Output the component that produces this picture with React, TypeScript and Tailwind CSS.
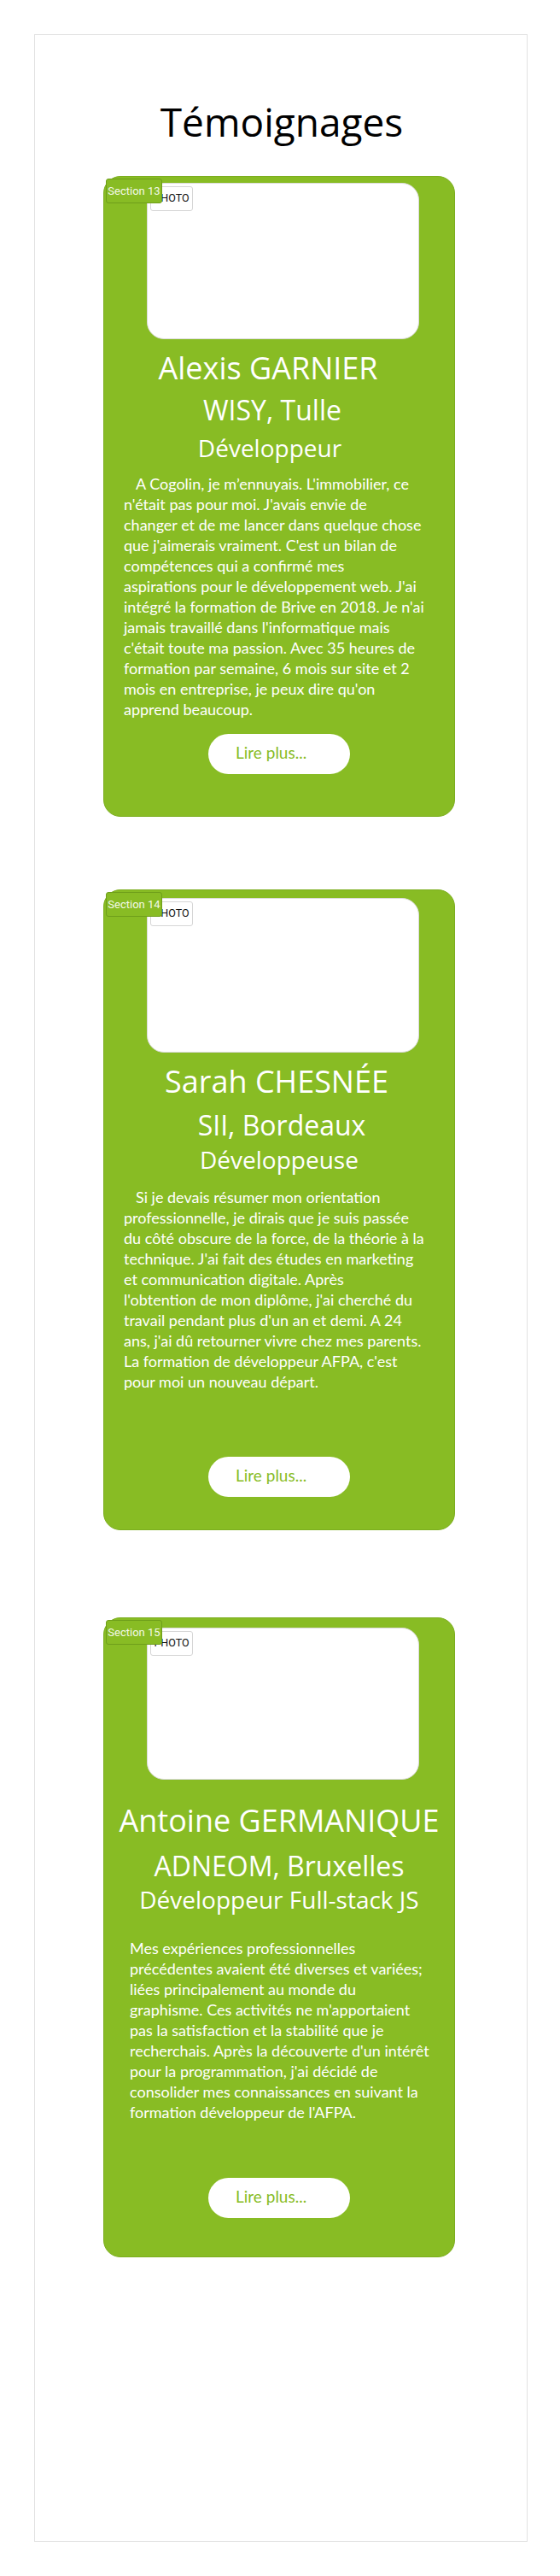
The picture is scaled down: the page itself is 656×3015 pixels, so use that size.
import React from "react";

type Card = {
  section: string;
  h: string;
  photoMt: string;
  photoH: string;
  lines: { text: string; cls: string }[];
  body: string[];
  bodyCls: string;
  btnMt: string;
};

const cards: Card[] = [
  {
    section: "Section 13",
    h: "h-[750px]",
    photoMt: "mt-[7px]",
    photoH: "h-[183px]",
    lines: [
      { text: "Alexis GARNIER", cls: "mt-[12px] text-[36px] leading-[44px] pr-[26px]" },
      { text: "WISY, Tulle", cls: "mt-[7px] text-[32px] leading-[40px] pr-[16px]" },
      { text: "Développeur", cls: "mt-[6px] text-[28px] leading-[36px] pr-[22px]" },
    ],
    body: [
      "A Cogolin, je m’ennuyais. L'immobilier, ce",
      "n'était pas pour moi. J'avais envie de",
      "changer et de me lancer dans quelque chose",
      "que j'aimerais vraiment. C'est un bilan de",
      "compétences qui a confirmé mes",
      "aspirations pour le développement web. J'ai",
      "intégré la formation de Brive en 2018. Je n'ai",
      "jamais travaillé dans l'informatique mais",
      "c'était toute ma passion. Avec 35 heures de",
      "formation par semaine, 6 mois sur site et 2",
      "mois en entreprise, je peux dire qu'on",
      "apprend beaucoup.",
    ],
    bodyCls: "mt-[12px] pl-[23px] indent-[14px]",
    btnMt: "mt-[17px]",
  },
  {
    section: "Section 14",
    h: "h-[750px]",
    photoMt: "mt-[9px]",
    photoH: "h-[181px]",
    lines: [
      { text: "Sarah CHESNÉE", cls: "mt-[12px] text-[36px] leading-[44px] pr-[6px]" },
      { text: "SII, Bordeaux", cls: "mt-[9px] text-[32px] leading-[40px] pl-[6px]" },
      { text: "Développeuse", cls: "mt-[2px] text-[28px] leading-[36px]" },
    ],
    body: [
      "Si je devais résumer mon orientation",
      "professionnelle, je dirais que je suis passée",
      "du côté obscure de la force, de la théorie à la",
      "technique. J'ai fait des études en marketing",
      "et communication digitale. Après",
      "l'obtention de mon diplôme, j'ai cherché du",
      "travail pendant plus d'un an et demi. A 24",
      "ans, j'ai dû retourner vivre chez mes parents.",
      "La formation de développeur AFPA, c'est",
      "pour moi un nouveau départ.",
    ],
    bodyCls: "mt-[14px] pl-[23px] indent-[14px]",
    btnMt: "mt-[76px]",
  },
  {
    section: "Section 15",
    h: "h-[749px]",
    photoMt: "mt-[11px]",
    photoH: "h-[178px]",
    lines: [
      { text: "Antoine GERMANIQUE", cls: "mt-[26px] text-[36px] leading-[44px]" },
      { text: "ADNEOM, Bruxelles", cls: "mt-[11px] text-[32px] leading-[40px]" },
      { text: "Développeur Full-stack JS", cls: "mt-[1px] text-[28px] leading-[36px]" },
    ],
    body: [
      "Mes expériences professionnelles",
      "précédentes avaient été diverses et variées;",
      "liées principalement au monde du",
      "graphisme. Ces activités ne m'apportaient",
      "pas la satisfaction et la stabilité que je",
      "recherchais. Après la découverte d'un intérêt",
      "pour la programmation, j'ai décidé de",
      "consolider mes connaissances en suivant la",
      "formation développeur de l'AFPA.",
    ],
    bodyCls: "mt-[27px] pl-[30px]",
    btnMt: "mt-[65px]",
  },
];

function TestimonialCard({ c, mt }: { c: Card; mt: string }) {
  return (
    <div
      className={`relative ${mt} ${c.h} w-[412px] ml-[80px] flex flex-col rounded-[20px] border border-[#7cae1f] bg-[#88bc24] text-white`}
    >
      <div
        className={`relative ${c.photoMt} ml-[50px] ${c.photoH} w-[319px] shrink-0 rounded-[20px] border border-[#dcdcdc] bg-white`}
      >
        <div className="absolute left-[3px] top-[3px] flex h-[29px] w-[50px] items-center justify-center rounded-[3px] border border-[#d6d6d6] bg-white font-[family-name:Roboto,'Liberation_Sans',sans-serif] text-[12.5px] font-normal text-[#111]">
          PHOTO
        </div>
      </div>
      <div className="absolute left-[2px] top-[2px] flex h-[29px] w-[66px] items-center justify-center rounded-[3px] border border-[#6e9e1a] bg-[#88bc24] font-[family-name:Roboto,'Liberation_Sans',sans-serif] text-[13px] text-[#f3f9e8]">
        {c.section}
      </div>
      {c.lines.map((l) => (
        <div
          key={l.text}
          className={`text-center whitespace-nowrap font-[family-name:'Open_Sans',sans-serif] ${l.cls}`}
        >
          {l.text}
        </div>
      ))}
      <p
        className={`whitespace-nowrap font-[family-name:Lato,'Open_Sans',sans-serif] text-[18px] leading-[24px] ${c.bodyCls}`}
      >
        {c.body.map((t, i) => (
          <React.Fragment key={i}>
            {t}
            {i < c.body.length - 1 && <br />}
          </React.Fragment>
        ))}
      </p>
      <a
        href="#"
        className={`${c.btnMt} mx-auto block h-[47px] w-[166px] shrink-0 rounded-full bg-white pl-[32px] font-[family-name:Lato,'Open_Sans',sans-serif] text-[19px] font-normal leading-[43px] text-[#88bc24]`}
      >
        Lire plus...
      </a>
    </div>
  );
}

export default function App() {
  return (
    <div className="min-h-[3015px] bg-white pt-[40px] pl-[40px]">
      <div className="flex h-[2935px] w-[578px] flex-col border border-[#e2e2e2] bg-white">
        <h1 className="mt-[73px] pl-[2px] text-center font-[family-name:'Open_Sans',sans-serif] text-[46px] leading-[56px] font-normal text-black">
          Témoignages
        </h1>
        {cards.map((c, i) => (
          <TestimonialCard
            key={c.section}
            c={c}
            mt={i === 0 ? "mt-[36px]" : i === 1 ? "mt-[85px]" : "mt-[102px]"}
          />
        ))}
      </div>
    </div>
  );
}
